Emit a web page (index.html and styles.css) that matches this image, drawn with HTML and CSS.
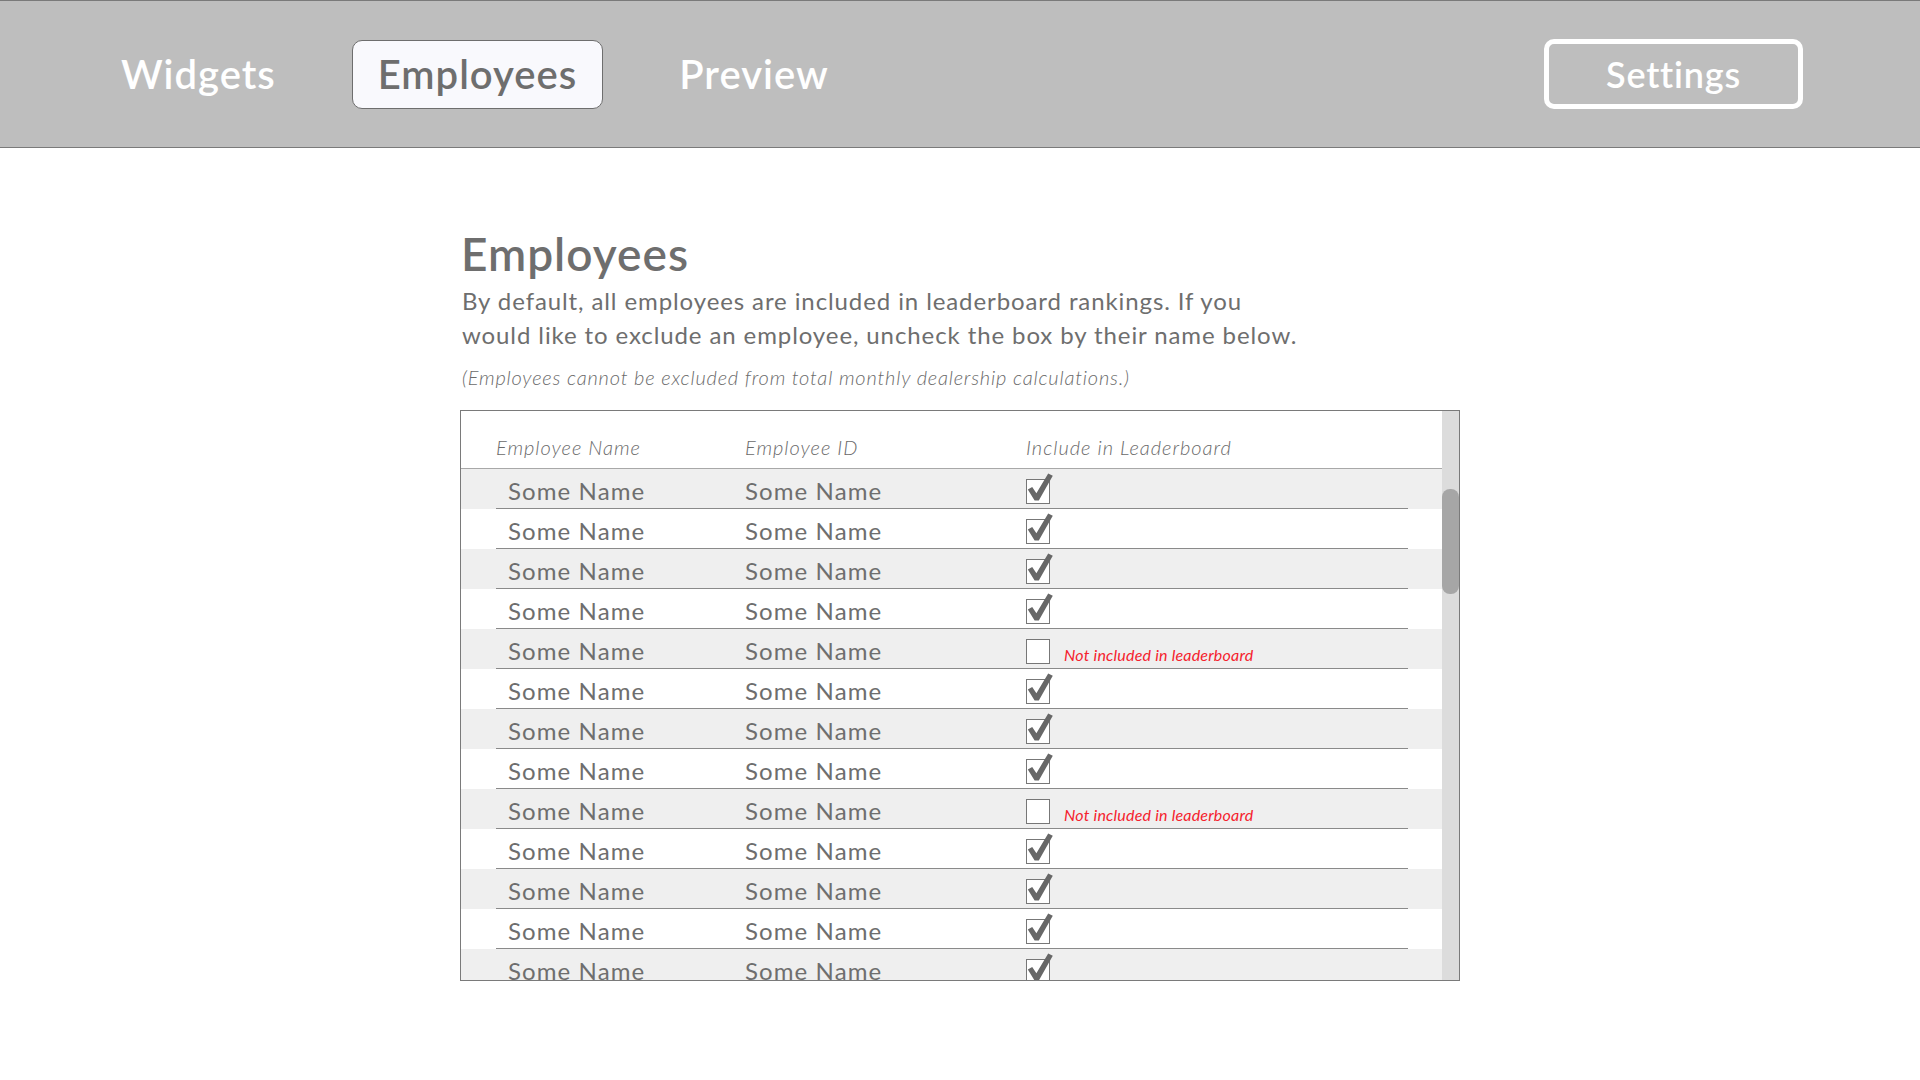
FILE: index.html
```html
<!DOCTYPE html>
<html lang="en">
<head>
<meta charset="utf-8">
<title>Employees</title>
<link rel="stylesheet" href="styles.css">
</head>
<body>
<header class="topbar">
  <nav class="tabs">
    <a class="tab">Widgets</a>
    <a class="tab tab-active">Employees</a>
    <a class="tab">Preview</a>
  </nav>
  <a class="settings">Settings</a>
</header>
<main class="content">
  <h1 class="title">Employees</h1>
  <p class="intro">By default, all employees are included in leaderboard rankings. If you<br>would like to exclude an employee, uncheck the box by their name below.</p>
  <p class="note">(Employees cannot be excluded from total monthly dealership calculations.)</p>
  <div class="table-box">
    <div class="table-scroll">
      <div class="thead">
        <span class="th">Employee Name</span>
        <span class="th">Employee ID</span>
        <span class="th">Include in Leaderboard</span>
      </div>
      <div class="row"><div class="row-inner"><span class="cell-name">Some Name</span><span class="cell-id">Some Name</span><span class="cell-inc"><span class="box checked"><svg class="tick" viewBox="0 0 24 24"><path d="M1.8 10.4 L6.2 7.9 L10.4 14.2 L22.2 -5.6 L26.8 -3.2 L12.8 21.6 L8.6 21.6 Z"/></svg></span></span></div></div>
      <div class="row"><div class="row-inner"><span class="cell-name">Some Name</span><span class="cell-id">Some Name</span><span class="cell-inc"><span class="box checked"><svg class="tick" viewBox="0 0 24 24"><path d="M1.8 10.4 L6.2 7.9 L10.4 14.2 L22.2 -5.6 L26.8 -3.2 L12.8 21.6 L8.6 21.6 Z"/></svg></span></span></div></div>
      <div class="row"><div class="row-inner"><span class="cell-name">Some Name</span><span class="cell-id">Some Name</span><span class="cell-inc"><span class="box checked"><svg class="tick" viewBox="0 0 24 24"><path d="M1.8 10.4 L6.2 7.9 L10.4 14.2 L22.2 -5.6 L26.8 -3.2 L12.8 21.6 L8.6 21.6 Z"/></svg></span></span></div></div>
      <div class="row"><div class="row-inner"><span class="cell-name">Some Name</span><span class="cell-id">Some Name</span><span class="cell-inc"><span class="box checked"><svg class="tick" viewBox="0 0 24 24"><path d="M1.8 10.4 L6.2 7.9 L10.4 14.2 L22.2 -5.6 L26.8 -3.2 L12.8 21.6 L8.6 21.6 Z"/></svg></span></span></div></div>
      <div class="row"><div class="row-inner"><span class="cell-name">Some Name</span><span class="cell-id">Some Name</span><span class="cell-inc"><span class="box"></span><span class="excluded">Not included in leaderboard</span></span></div></div>
      <div class="row"><div class="row-inner"><span class="cell-name">Some Name</span><span class="cell-id">Some Name</span><span class="cell-inc"><span class="box checked"><svg class="tick" viewBox="0 0 24 24"><path d="M1.8 10.4 L6.2 7.9 L10.4 14.2 L22.2 -5.6 L26.8 -3.2 L12.8 21.6 L8.6 21.6 Z"/></svg></span></span></div></div>
      <div class="row"><div class="row-inner"><span class="cell-name">Some Name</span><span class="cell-id">Some Name</span><span class="cell-inc"><span class="box checked"><svg class="tick" viewBox="0 0 24 24"><path d="M1.8 10.4 L6.2 7.9 L10.4 14.2 L22.2 -5.6 L26.8 -3.2 L12.8 21.6 L8.6 21.6 Z"/></svg></span></span></div></div>
      <div class="row"><div class="row-inner"><span class="cell-name">Some Name</span><span class="cell-id">Some Name</span><span class="cell-inc"><span class="box checked"><svg class="tick" viewBox="0 0 24 24"><path d="M1.8 10.4 L6.2 7.9 L10.4 14.2 L22.2 -5.6 L26.8 -3.2 L12.8 21.6 L8.6 21.6 Z"/></svg></span></span></div></div>
      <div class="row"><div class="row-inner"><span class="cell-name">Some Name</span><span class="cell-id">Some Name</span><span class="cell-inc"><span class="box"></span><span class="excluded">Not included in leaderboard</span></span></div></div>
      <div class="row"><div class="row-inner"><span class="cell-name">Some Name</span><span class="cell-id">Some Name</span><span class="cell-inc"><span class="box checked"><svg class="tick" viewBox="0 0 24 24"><path d="M1.8 10.4 L6.2 7.9 L10.4 14.2 L22.2 -5.6 L26.8 -3.2 L12.8 21.6 L8.6 21.6 Z"/></svg></span></span></div></div>
      <div class="row"><div class="row-inner"><span class="cell-name">Some Name</span><span class="cell-id">Some Name</span><span class="cell-inc"><span class="box checked"><svg class="tick" viewBox="0 0 24 24"><path d="M1.8 10.4 L6.2 7.9 L10.4 14.2 L22.2 -5.6 L26.8 -3.2 L12.8 21.6 L8.6 21.6 Z"/></svg></span></span></div></div>
      <div class="row"><div class="row-inner"><span class="cell-name">Some Name</span><span class="cell-id">Some Name</span><span class="cell-inc"><span class="box checked"><svg class="tick" viewBox="0 0 24 24"><path d="M1.8 10.4 L6.2 7.9 L10.4 14.2 L22.2 -5.6 L26.8 -3.2 L12.8 21.6 L8.6 21.6 Z"/></svg></span></span></div></div>
      <div class="row"><div class="row-inner"><span class="cell-name">Some Name</span><span class="cell-id">Some Name</span><span class="cell-inc"><span class="box checked"><svg class="tick" viewBox="0 0 24 24"><path d="M1.8 10.4 L6.2 7.9 L10.4 14.2 L22.2 -5.6 L26.8 -3.2 L12.8 21.6 L8.6 21.6 Z"/></svg></span></span></div></div>
      <div class="row"><div class="row-inner"><span class="cell-name">Some Name</span><span class="cell-id">Some Name</span><span class="cell-inc"><span class="box checked"><svg class="tick" viewBox="0 0 24 24"><path d="M1.8 10.4 L6.2 7.9 L10.4 14.2 L22.2 -5.6 L26.8 -3.2 L12.8 21.6 L8.6 21.6 Z"/></svg></span></span></div></div>
    </div>
    <div class="scrollbar"><div class="thumb"></div></div>
  </div>
</main>
</body>
</html>
```

FILE: styles.css
```css
* { box-sizing: border-box; }

html, body {
  margin: 0;
  padding: 0;
  background: #ffffff;
}

body {
  font-family: "Lato", "Liberation Sans", sans-serif;
  color: #707070;
}

/* ---------- top bar ---------- */
.topbar {
  height: 148px;
  background: #bebebe;
  border-top: 1px solid #7a7a7a;
  border-bottom: 1px solid #7a7a7a;
  display: flex;
  align-items: center;
  justify-content: space-between;
  padding: 0 117px 0 95px;
}

.tabs {
  display: flex;
  align-items: center;
  gap: 50px;
}

.tab {
  display: flex;
  align-items: center;
  height: 69px;
  padding: 0 25px;
  border: 1px solid transparent;
  border-radius: 10px;
  font-size: 40px;
  font-weight: 600;
  letter-spacing: 1px;
  color: #ffffff;
  cursor: pointer;
}

.tab-active {
  background: #f9f9fd;
  border-color: #6e6e6e;
  color: #6e6e6e;
}

.settings {
  display: flex;
  align-items: center;
  justify-content: center;
  width: 259px;
  height: 70px;
  border: 5px solid #ffffff;
  border-radius: 10px;
  font-size: 36px;
  font-weight: 600;
  letter-spacing: 0.8px;
  color: #ffffff;
  cursor: pointer;
}

/* ---------- content ---------- */
.content {
  margin-left: 460px;
  width: 1000px;
  padding-top: 78px;
}

.title {
  margin: 0 0 0 1px;
  font-size: 46px;
  line-height: 56px;
  font-weight: 600;
  letter-spacing: 1px;
  color: #6e6e6e;
}

.intro {
  margin: 2px 0 0 2px;
  font-size: 24px;
  line-height: 34px;
  letter-spacing: 0.9px;
  color: #6e6e6e;
  white-space: nowrap;
}

.note {
  margin: 13px 0 0 2px;
  font-size: 20px;
  line-height: 24px;
  font-style: italic;
  font-weight: 300;
  letter-spacing: 0.8px;
  color: #6a6a6a;
}

/* ---------- table ---------- */
.table-box {
  margin-top: 21px;
  height: 571px;
  border: 1px solid #7a7a7a;
  display: flex;
  overflow: hidden;
}

.table-scroll {
  flex: 1;
  overflow: hidden;
}

.thead {
  height: 58px;
  border-bottom: 1px solid #a8a8a8;
  display: grid;
  grid-template-columns: 249px 281px 1fr;
  padding-left: 35px;
  align-items: end;
  padding-bottom: 9px;
}

.th {
  font-size: 20px;
  font-style: italic;
  font-weight: 300;
  letter-spacing: 1px;
  color: #6a6a6a;
  line-height: 24px;
}

.row:nth-child(even) { background: #efefef; }

.row-inner {
  height: 40px;
  margin: 0 34px 0 35px;
  border-bottom: 1px solid #8a8a8a;
  display: grid;
  grid-template-columns: 249px 281px 1fr;
}

.cell-name,
.cell-id {
  font-size: 24px;
  line-height: 39px;
  padding-top: 2px;
  letter-spacing: 1.1px;
  color: #6e6e6e;
  white-space: nowrap;
}

.cell-name { padding-left: 12px; }

.cell-inc {
  display: flex;
  align-items: flex-start;
  padding-top: 10px;
}

.box {
  position: relative;
  width: 24px;
  height: 25px;
  border: 1px solid #777777;
  background: #ffffff;
  flex: none;
}

.tick {
  position: absolute;
  left: -1px;
  top: -1px;
  width: 24px;
  height: 24px;
  overflow: visible;
  fill: #676767;
}

.excluded {
  margin-left: 14px;
  margin-top: 6px;
  font-size: 16px;
  line-height: 20px;
  font-style: italic;
  letter-spacing: 0.2px;
  color: #f5222d;
}

.scrollbar {
  width: 17px;
  flex: none;
  background: #dcdcdc;
  padding-top: 78px;
}

.thumb {
  height: 105px;
  border-radius: 8px;
  background: #a6a6a6;
}
```
